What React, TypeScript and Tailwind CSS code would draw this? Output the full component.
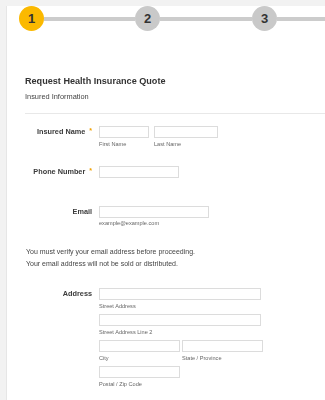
import React from "react";

const font = { fontFamily: '"Liberation Sans", Arial, sans-serif' };

function Box({ w }: { w: string }) {
  return <div className={`${w} h-[12px] border border-[#dcdcdc] bg-white`} />;
}

function Sub({ children }: { children: React.ReactNode }) {
  return <div className="text-[5.6px] leading-[8px] text-[#666] mt-[1.5px] whitespace-nowrap">{children}</div>;
}

function Label({ text, req }: { text: string; req?: boolean }) {
  return (
    <div className="w-[92px] shrink-0 flex justify-end items-center pr-[7px] h-[12px]">
      <span className="text-[7.3px] font-bold text-[#3a3a3a] leading-[12px] whitespace-nowrap">{text}</span>
      {req && <span className="text-[7px] font-bold text-[#f0a000] ml-[4px] leading-[12px] relative top-[-1px]">*</span>}
    </div>
  );
}

function Step({ n, active }: { n: string; active?: boolean }) {
  return (
    <div
      className={`w-[25px] h-[25px] shrink-0 rounded-full flex items-center justify-center text-[13px] font-bold text-[#333] ${
        active ? "bg-[#fbb900]" : "bg-[#c9c9c9]"
      }`}
    >
      {n}
    </div>
  );
}

export default function App() {
  return (
    <div style={font} className="w-[325px] h-[400px] bg-[#f2f2f2] overflow-hidden pt-[6px] pl-[6px]">
      <div className="bg-white h-full border-l border-[#e6e6e6]">
        <div className="flex items-center pl-[12px]">
          <Step n="1" active />
          <div className="w-[91px] h-[4px] shrink-0 bg-[#cccccc]" />
          <Step n="2" />
          <div className="w-[92px] h-[4px] shrink-0 bg-[#cccccc]" />
          <Step n="3" />
          <div className="flex-1 h-[4px] bg-[#cccccc]" />
        </div>

        <div className="[will-change:transform]">
          <div className="pl-[18px] mt-[43px]">
            <div className="text-[9.1px] font-bold text-[#333] leading-[14px]">Request Health Insurance Quote</div>
            <div className="text-[7.4px] text-[#444] leading-[11px] mt-[3px]">Insured Information</div>
            <div className="h-px bg-[#e8e8e8] mt-[11px]" />
          </div>

          <div className="mt-[12px]">
            <div className="flex items-start">
              <Label text="Insured Name" req />
              <div className="flex gap-[5px]">
                <div>
                  <Box w="w-[50px]" />
                  <Sub>First Name</Sub>
                </div>
                <div>
                  <Box w="w-[64px]" />
                  <Sub>Last Name</Sub>
                </div>
              </div>
            </div>

            <div className="flex items-start mt-[18px]">
              <Label text="Phone Number" req />
              <Box w="w-[80px]" />
            </div>

            <div className="flex items-start mt-[28px]">
              <Label text="Email" />
              <div>
                <Box w="w-[110px]" />
                <Sub>example@example.com</Sub>
              </div>
            </div>

            <div className="pl-[19px] mt-[19px] text-[7px] text-[#444] leading-[12px]">
              <div>You must verify your email address before proceeding.</div>
              <div>Your email address will not be sold or distributed.</div>
            </div>

            <div className="flex items-start mt-[18px]">
              <Label text="Address" />
              <div>
                <Box w="w-[162px]" />
                <Sub>Street Address</Sub>
                <div className="mt-[4.5px]">
                  <Box w="w-[162px]" />
                  <Sub>Street Address Line 2</Sub>
                </div>
                <div className="mt-[4.5px] flex gap-[2px]">
                  <div>
                    <Box w="w-[81px]" />
                    <Sub>City</Sub>
                  </div>
                  <div>
                    <Box w="w-[81px]" />
                    <Sub>State / Province</Sub>
                  </div>
                </div>
                <div className="mt-[4.5px]">
                  <Box w="w-[81px]" />
                  <Sub>Postal / Zip Code</Sub>
                </div>
              </div>
            </div>
          </div>
        </div>
      </div>
    </div>
  );
}
